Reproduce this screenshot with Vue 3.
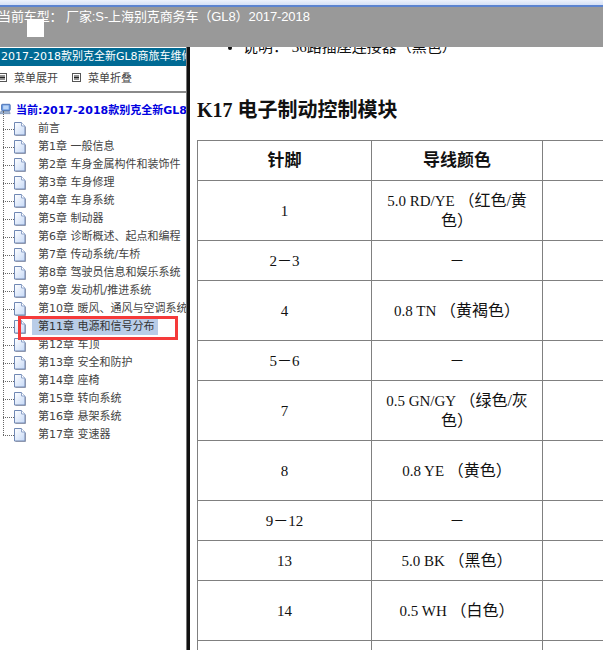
<script setup>
const chapters = [
  '前言', '第1章 一般信息', '第2章 车身金属构件和装饰件', '第3章 车身修理', '第4章 车身系统', '第5章 制动器',
  '第6章 诊断概述、起点和编程', '第7章 传动系统/车桥', '第8章 驾驶员信息和娱乐系统', '第9章 发动机/推进系统',
  '第10章 暖风、通风与空调系统', '第11章 电源和信号分布', '第12章 车顶', '第13章 安全和防护', '第14章 座椅',
  '第15章 转向系统', '第16章 悬架系统', '第17章 变速器'
]
const rows = [
  { pin: '1', code: '5.0 RD/YE', zh: '（红色/黄色）', h: 60 },
  { pin: '2－3', code: '－', zh: '', h: 40 },
  { pin: '4', code: '0.8 TN', zh: '（黄褐色）', h: 60 },
  { pin: '5－6', code: '－', zh: '', h: 40 },
  { pin: '7', code: '0.5 GN/GY', zh: '（绿色/灰色）', h: 60 },
  { pin: '8', code: '0.8 YE', zh: '（黄色）', h: 60 },
  { pin: '9－12', code: '－', zh: '', h: 40 },
  { pin: '13', code: '5.0 BK', zh: '（黑色）', h: 40 },
  { pin: '14', code: '0.5 WH', zh: '（白色）', h: 60 },
  { pin: '', code: '', zh: '', h: 40 }
]
</script>

<template>
  <div class="page">
    <div class="strip"></div>
    <header class="topbar">当前车型： 厂家:S-上海别克商务车（GL8）2017-2018</header>
    <div class="square"></div>
    <div class="body">
      <aside class="side">
        <div class="title">2017-2018款别克全新GL8商旅车维修手册</div>
        <div class="tools">
          <span class="tool">
            <svg class="menuicon" viewBox="0 0 9 9"><rect x="0.5" y="0.5" width="8" height="8" fill="#fff" stroke="#555"/><path d="M2 3h5M2 4.5h5M2 6h5" stroke="#222"/></svg>
            菜单展开
          </span>
          <span class="tool">
            <svg class="menuicon" viewBox="0 0 9 9"><rect x="0.5" y="0.5" width="8" height="8" fill="#fff" stroke="#555"/><path d="M2 3h5M2 4.5h5M2 6h5" stroke="#222"/></svg>
            菜单折叠
          </span>
        </div>
        <div class="current">
          <svg class="pc" viewBox="0 0 14 14">
            <rect x="2" y="1" width="11" height="8" rx="1" fill="#6d9be0" stroke="#3a62a8"/>
            <rect x="4" y="2.5" width="7" height="5" fill="#bcd6f7"/>
            <path d="M1 10h11l1 3H0z" fill="#9db4d4" stroke="#5b7299" stroke-width="0.6"/>
          </svg>
          <span>当前:2017-2018款别克全新GL8商旅车维修手册</span>
        </div>
        <ul class="tree">
          <li v-for="c in chapters" :key="c" class="node">
            <span class="dots"></span>
            <svg class="doc" viewBox="0 0 12 14">
              <defs>
                <linearGradient id="docfill" x1="0" y1="0" x2="1" y2="1">
                  <stop offset="0" stop-color="#ffffff"/>
                  <stop offset="1" stop-color="#c6d9f7"/>
                </linearGradient>
              </defs>
              <path d="M.5 .5h7l3.5 3.5v9H.5z" fill="url(#docfill)" stroke="#7088b4"/>
              <path d="M7.5 .5V4H11" fill="#fff" stroke="#8ea3c9"/>
              <path d="M1.5 13.5h10V5" fill="none" stroke="#8d96ad"/>
            </svg>
            <span class="label" :class="{ selected: c.startsWith('第11章') }">{{ c }}</span>
          </li>
        </ul>
        <div class="redbox"></div>
      </aside>
      <div class="divider"></div>
      <main class="main">
        <ul class="note"><li>说明： 36路插座连接器（黑色）</li></ul>
        <h2 class="heading">K17 电子制动控制模块</h2>
        <table class="pins">
          <colgroup><col class="c1" /><col class="c2" /><col class="c3" /></colgroup>
          <thead>
            <tr class="headrow"><th>针脚</th><th>导线颜色</th><th></th></tr>
          </thead>
          <tbody>
            <tr v-for="(r, i) in rows" :key="i" :style="{ height: r.h + 'px' }">
              <td>{{ r.pin }}</td>
              <td>{{ r.code }} <span class="zh">{{ r.zh }}</span></td>
              <td></td>
            </tr>
          </tbody>
        </table>
      </main>
    </div>
  </div>
</template>

<style scoped>
.page {
  position: relative;
  width: 603px;
  height: 650px;
  overflow: hidden;
  display: flex;
  flex-direction: column;
  background: #fff;
  font-family: "Liberation Serif", "Noto Sans CJK SC", serif;
  color: #111;
}
.strip {
  height: 7px;
  flex: none;
  box-sizing: border-box;
  background: linear-gradient(180deg, #eef3fc, #d5e0f5);
  border-bottom: 2px solid #5c84d0;
}
.topbar {
  height: 40px;
  flex: none;
  box-sizing: border-box;
  background: #999;
  color: #fff;
  font: 13px/19px "Liberation Sans", "Noto Sans CJK SC", sans-serif;
  letter-spacing: -0.1px;
  margin-left: -2px;
  white-space: nowrap;
}
.square {
  position: absolute;
  left: 27px;
  top: 19px;
  width: 17px;
  height: 18px;
  background: #fff;
}
.body {
  flex: 1;
  display: flex;
  min-height: 0;
}
.side {
  position: relative;
  width: 186px;
  flex: none;
  overflow: hidden;
  padding-top: 1px;
  font-family: "DejaVu Sans", "Noto Sans CJK SC", sans-serif;
}
.title {
  height: 18px;
  background: #006a94;
  color: #fff;
  font-size: 11px;
  line-height: 18px;
  white-space: nowrap;
  overflow: hidden;
  padding-left: 1px;
}
.tools {
  height: 27px;
  box-sizing: border-box;
  border-bottom: 2px solid #8a8a8a;
  display: flex;
  gap: 14px;
  padding: 2px 0 0 0;
  margin-left: -2px;
  font-size: 11px;
  color: #444;
}
.tool {
  display: flex;
  align-items: center;
  gap: 7px;
  height: 18px;
}
.menuicon { width: 9px; height: 9px; }
.current {
  display: flex;
  align-items: center;
  gap: 5px;
  height: 18px;
  margin: 7px 0 2px;
  color: #0000e0;
  font-size: 11px;
  font-weight: 700;
  white-space: nowrap;
}
.pc { width: 11px; height: 14px; flex: none; }
.tree {
  list-style: none;
  margin: 0;
  padding: 0 0 0 3px;
  position: relative;
}
.tree::before {
  content: "";
  position: absolute;
  left: 3px;
  top: -9px;
  bottom: 9px;
  border-left: 1px dotted #666;
}
.node {
  height: 18px;
  display: flex;
  align-items: center;
  font-size: 11px;
  color: #444;
  white-space: nowrap;
}
.dots {
  width: 11px;
  flex: none;
  border-top: 1px dotted #666;
}
.doc { width: 12px; height: 14px; flex: none; }
.label {
  margin-left: 6px;
  padding: 1px 3px 1px 6px;
  line-height: 14px;
}
.label.selected { background: #b9cde8; color: #333; }
.redbox {
  position: absolute;
  left: 18px;
  top: 269px;
  width: 160px;
  height: 24px;
  box-sizing: border-box;
  border: 3px solid #f53a3a;
}
.divider {
  width: 4px;
  flex: none;
  background: linear-gradient(90deg, #777 0, #777 25%, #111 25%, #111 100%);
}
.main {
  flex: 1;
  min-width: 0;
  overflow: hidden;
  padding-left: 7px;
}
.note {
  margin: -9px 0 0;
  padding-left: 46px;
  font-size: 15px;
  line-height: 18px;
  white-space: nowrap;
}
.heading {
  margin: 40px 0 0;
  font-size: 20px;
  line-height: 28px;
  font-weight: 700;
  white-space: nowrap;
}
.pins {
  margin-top: 16px;
  border-collapse: collapse;
  table-layout: fixed;
  width: 520px;
  font-size: 15px;
  line-height: 20px;
  text-align: center;
}
.c1 { width: 174px; }
.c2 { width: 171px; }
.c3 { width: 175px; }
.pins th, .pins td {
  border: 1px solid #808080;
  padding: 0 12px;
}
.zh { font-size: 16px; }
.headrow { height: 40px; }
.pins th { font-size: 17px; }
</style>
